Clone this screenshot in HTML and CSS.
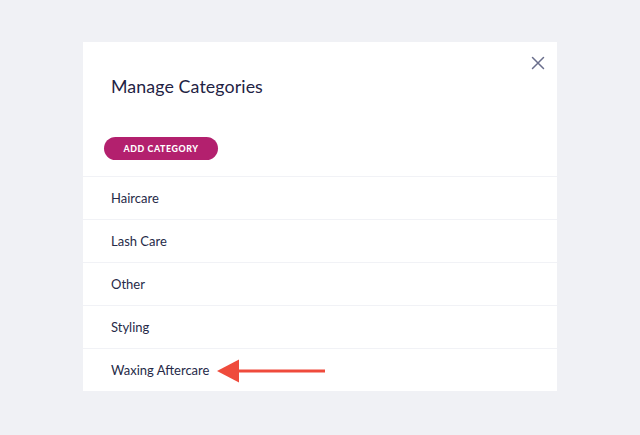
FILE: index.html
```html
<!DOCTYPE html>
<html>
<head>
<meta charset="utf-8">
<link rel="stylesheet" href="styles.css">
</head>
<body>
<div class="modal">
  <div class="header">
    <h1 class="title">Manage Categories</h1>
    <button class="close" aria-label="Close">
      <svg width="14" height="14" viewBox="0 0 14 14"><path d="M1.5 1.5 L12.5 12.5 M12.5 1.5 L1.5 12.5" stroke="#6a6e8c" stroke-width="1.5" stroke-linecap="round" fill="none"/></svg>
    </button>
  </div>
  <div class="actions">
    <button class="add-btn">ADD CATEGORY</button>
  </div>
  <ul class="list">
    <li class="row">Haircare</li>
    <li class="row">Lash Care</li>
    <li class="row">Other</li>
    <li class="row">Styling</li>
    <li class="row">Waxing Aftercare
      <svg class="arrow" width="110" height="24" viewBox="0 0 110 24"><path d="M20 10.5 H108 V13.5 H20 Z" fill="#ef4b3c"/><path d="M0 12 L22 0.5 L22 23.5 Z" fill="#ef4b3c"/></svg>
    </li>
  </ul>
</div>
</body>
</html>
```
FILE: styles.css
```css
html, body {
  margin: 0;
  padding: 0;
}
body {
  background: #f0f1f5;
  width: 640px;
  height: 435px;
  overflow: hidden;
  font-family: "Lato", "Liberation Sans", sans-serif;
  color: #262a48;
}
.modal {
  margin: 42px 0 0 83px;
  width: 474px;
  height: 349px;
  background: #ffffff;
  display: flex;
  flex-direction: column;
}
.header {
  position: relative;
  padding: 32px 28px 0 28px;
}
.title {
  margin: 0;
  font-size: 17.8px;
  font-weight: 400;
  letter-spacing: 0.1px;
  line-height: 24px;
  color: #1f2344;
}
.close {
  position: absolute;
  top: 14px;
  right: 12px;
  border: none;
  background: none;
  padding: 0;
  width: 14px;
  height: 14px;
  display: flex;
}
.actions {
  padding: 39px 0 0 21px;
  height: 39px;
  box-sizing: content-box;
}
.add-btn {
  height: 23px;
  width: 114px;
  border: none;
  border-radius: 12px;
  background: #b3206e;
  color: #ffffff;
  font-family: "Lato", "Liberation Sans", sans-serif;
  font-weight: 900;
  font-size: 8.8px;
  letter-spacing: 0.6px;
  padding: 0;
  display: flex;
  align-items: center;
  justify-content: center;
}
.list {
  list-style: none;
  margin: 0;
  padding: 0;
}
.row {
  height: 43px;
  box-sizing: border-box;
  border-top: 1px solid #f1f2f6;
  padding-left: 28px;
  display: flex;
  align-items: center;
  font-size: 13px;
  color: #262a48;
}
.arrow {
  margin-left: 8px;
  margin-top: 1px;
}
```
